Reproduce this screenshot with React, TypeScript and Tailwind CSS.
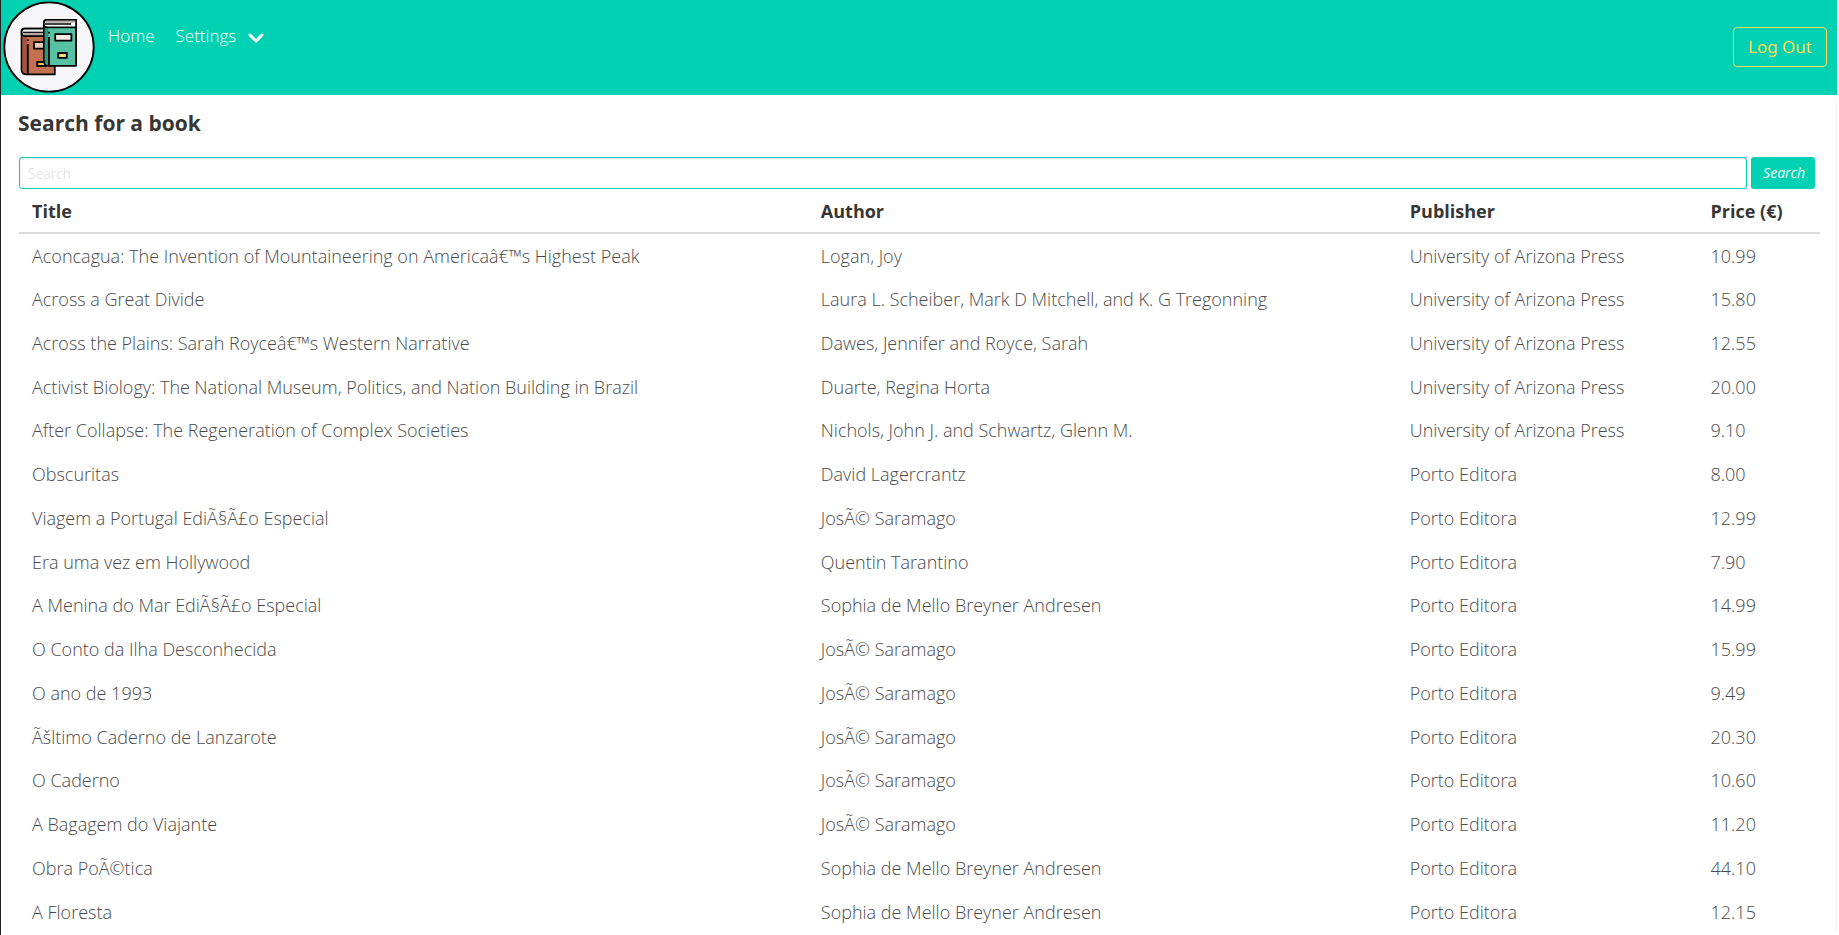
const books: [string, string, string, string][] = [
  ["Aconcagua: The Invention of Mountaineering on Americaâ€™s Highest Peak", "Logan, Joy", "University of Arizona Press", "10.99"],
  ["Across a Great Divide", "Laura L. Scheiber, Mark D Mitchell, and K. G Tregonning", "University of Arizona Press", "15.80"],
  ["Across the Plains: Sarah Royceâ€™s Western Narrative", "Dawes, Jennifer and Royce, Sarah", "University of Arizona Press", "12.55"],
  ["Activist Biology: The National Museum, Politics, and Nation Building in Brazil", "Duarte, Regina Horta", "University of Arizona Press", "20.00"],
  ["After Collapse: The Regeneration of Complex Societies", "Nichols, John J. and Schwartz, Glenn M.", "University of Arizona Press", "9.10"],
  ["Obscuritas", "David Lagercrantz", "Porto Editora", "8.00"],
  ["Viagem a Portugal EdiÃ§Ã£o Especial", "JosÃ© Saramago", "Porto Editora", "12.99"],
  ["Era uma vez em Hollywood", "Quentin Tarantino", "Porto Editora", "7.90"],
  ["A Menina do Mar EdiÃ§Ã£o Especial", "Sophia de Mello Breyner Andresen", "Porto Editora", "14.99"],
  ["O Conto da Ilha Desconhecida", "JosÃ© Saramago", "Porto Editora", "15.99"],
  ["O ano de 1993", "JosÃ© Saramago", "Porto Editora", "9.49"],
  ["Ãšltimo Caderno de Lanzarote", "JosÃ© Saramago", "Porto Editora", "20.30"],
  ["O Caderno", "JosÃ© Saramago", "Porto Editora", "10.60"],
  ["A Bagagem do Viajante", "JosÃ© Saramago", "Porto Editora", "11.20"],
  ["Obra PoÃ©tica", "Sophia de Mello Breyner Andresen", "Porto Editora", "44.10"],
  ["A Floresta", "Sophia de Mello Breyner Andresen", "Porto Editora", "12.15"],
];

function Logo() {
  return (
    <svg viewBox="0 0 92 92" className="size-[92px]" aria-hidden="true">
      <circle cx="46" cy="46" r="44.7" fill="#f7f7f9" stroke="#000" strokeWidth="1.8" />
      <g stroke="#000" strokeWidth="1.8" strokeLinejoin="round">
        <path d="M18.600 30.600q0-3 3-3h30.200v45.800H23.600q-5 0-5-5z" fill="#c1714f" />
        <path d="M19.500 35.500h4.300v37q-4.300 0-4.300-4z" fill="#a4533f" stroke="none" />
        <path d="M18.600 30.600q0-3 3-3h30.200V35H21.600q-3 0-3-3.400z" fill="#f2eeec" />
        <path d="M20 31.500h31.800v2.800H21z" fill="#b3a9a5" stroke="none" />
        <path d="M20 31.300h32" fill="none" strokeWidth="1.200" />
        <path d="M24.800 43v30M24.800 38.500v1.600" fill="none" />
        <path d="M31 41.200h13v6.400H31z" fill="#eccbbd" />
        <path d="M34.200 61h9v4h-9z" fill="#f8c93d" />
        <path d="M40.900 22q0-3.100 3.100-3.100h29.100v45.900H45.900q-5 0-5-5z" fill="#57c1a3" />
        <path d="M41.800 27.200h3.400v36.700q-3.400 0-3.400-4z" fill="#2f9480" stroke="none" />
        <path d="M40.900 22q0-3.100 3.100-3.100h29.100v7.500H43.900q-3 0-3-3.400z" fill="#fff" />
        <path d="M43 19.800h29.200v2H42.500z" fill="#b3a9a5" stroke="none" />
        <path d="M42 23h26" fill="none" strokeWidth="1.500" />
        <path d="M46 36v28.500M46 30.800v1.800" fill="none" />
        <path d="M52.200 33.200h16.200v6.400H52.200z" fill="#f8ece8" />
        <path d="M55.200 52h8.600v4.800h-8.600z" fill="#f6df6b" />
      </g>
    </svg>
  );
}

export default function App() {
  return (
    <div className="h-screen overflow-hidden border-l border-r-2 border-l-[#222] border-r-white bg-white font-['Open_Sans',sans-serif] text-[18px] font-light leading-7 text-[#4a4a4a]">
      <header className="flex h-[95px] items-start bg-[#00d1b2] pl-[2px] pr-[10px] text-white">
        <a href="#home" aria-label="Bookshop home" className="pt-px">
          <Logo />
        </a>
        <nav className="flex gap-[21px] pl-[13px] pt-[22px] text-[17px]">
          <a href="#home">Home</a>
          <button type="button" className="flex items-center gap-3">
            Settings
            <svg viewBox="0 0 16 10" className="mt-1 h-[10px] w-4" fill="none" stroke="currentColor" strokeWidth="3" aria-hidden="true">
              <path d="M2 2l6 6 6-6" strokeLinecap="round" strokeLinejoin="round" />
            </svg>
          </button>
        </nav>
        <button type="button" className="ml-auto mt-[27px] h-10 rounded border border-[#ffdd57] px-[14px] font-['Noto_Sans',sans-serif] text-[17px] font-normal text-[#ffdd57]">
          Log Out
        </button>
      </header>
      <main className="rounded-t-md border-r border-[#f5f5f5] px-4 pt-3">
        <h1 className="pl-px text-[21px] font-bold leading-8 text-[#363636]">
          <label htmlFor="search">Search for a book</label>
        </h1>
        <form className="mt-[18px] flex gap-1 pl-[2px] pr-[5px]" onSubmit={(e) => e.preventDefault()}>
          <input id="search" type="text" placeholder="Search" className="h-8 min-w-0 flex-1 rounded-[3px] border border-[#00d1b2] px-2 text-[14px] shadow-[inset_0_1px_2px_rgba(10,10,10,0.1)] placeholder:text-[#dbdbdb]" />
          <button type="submit" className="h-8 rounded-[3px] bg-[#00d1b2] pl-3 pr-[10px] text-[14px] font-normal italic text-white">Search</button>
        </form>
        <div className="pl-[2px]">
          <table className="w-full table-fixed border-collapse text-left">
            <colgroup>
              <col className="w-[43.8%]" />
              <col className="w-[32.7%]" />
              <col className="w-[16.7%]" />
              <col />
            </colgroup>
            <thead>
              <tr className="h-11 border-b-2 border-[#dbdbdb] font-bold text-[#363636]">
                <th scope="col" className="px-[13px]">Title</th>
                <th scope="col" className="px-[13px]">Author</th>
                <th scope="col" className="px-[13px]">Publisher</th>
                <th scope="col" className="px-[13px]">Price (€)</th>
              </tr>
            </thead>
            <tbody>
              {books.map((book) => (
                <tr key={book[0]} className="h-11 nth-[4n]:h-[43px]">
                  {book.map((value, i) => (
                    <td key={i} className="px-[13px]">{value}</td>
                  ))}
                </tr>
              ))}
            </tbody>
          </table>
        </div>
      </main>
    </div>
  );
}
